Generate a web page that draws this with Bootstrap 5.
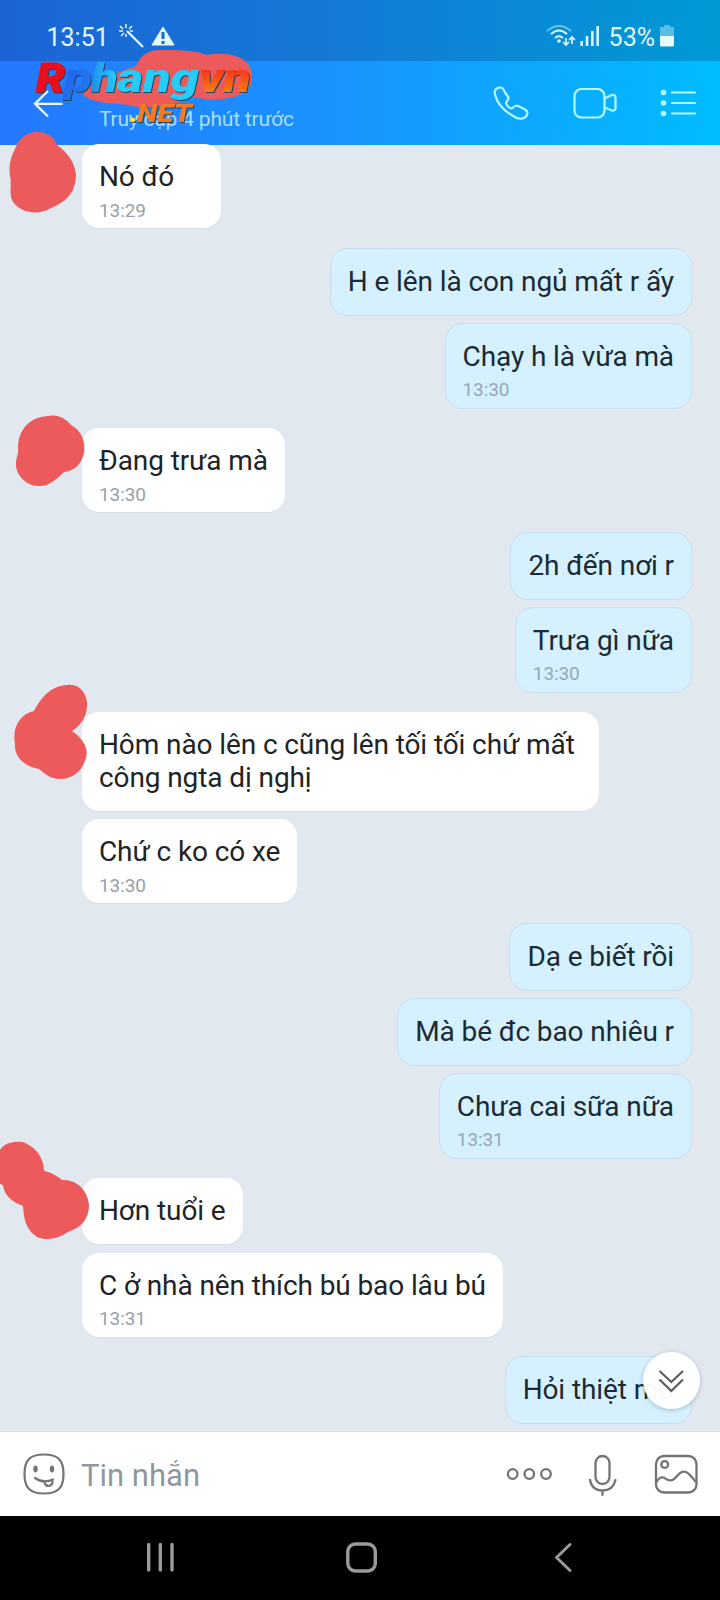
<!DOCTYPE html>
<html lang="vi">
<head>
<meta charset="utf-8">
<meta name="viewport" content="width=device-width, initial-scale=1">
<title>Tin nhắn</title>
<link href="https://cdn.jsdelivr.net/npm/bootstrap@5.3.0/dist/css/bootstrap.min.css" rel="stylesheet">
<style>
  body { width: 720px; height: 1600px; font-family: Roboto, "Noto Sans", sans-serif; background: #e2e8f0; overflow: hidden; }
  svg { display: block; flex: none; overflow: visible; }
  .top-area { height: 144.5px; background: linear-gradient(90deg, #2478ff, #1a93ff 45%, #00bcff); color: #fff; }
  .status { height: 60.5px; background: rgba(0, 20, 50, .2); padding: 14px 45px 0 46.5px; color: #e2f8ff; font-size: 25px; line-height: 47px; }
  .clock { width: 71.5px; }
  .appbar { height: 84px; }
  .last-seen { font-size: 21px; line-height: 25px; letter-spacing: -.2px; color: #a5defe; margin: 46.5px 0 0 35px; }
  .chat { height: 1287px; padding: 0 28px 0 82px; gap: 19.5px; margin-top: -.5px; }
  .bubble { height: 66px; flex: none; border-radius: 17px; padding: 17px 17px 0 17px; font-size: 28px; line-height: 32.8px; letter-spacing: -.1px; color: #202427; white-space: nowrap; }
  .bubble time { display: block; font-size: 19px; line-height: 22px; color: #98a1a8; margin-top: 6.2px; }
  .bubble:has(time) { height: 84px; }
  .bubble.two-lines { height: 98.5px; width: 517px; }
  .from-them .bubble { background: #fff; box-shadow: 0 1px 1px #d8dee6; }
  .from-them { gap: 8.5px; }
  .from-me { gap: 7px; }
  .from-me .bubble { height: 68px; background: #d5f0ff; border: 1px solid #c7dfed; padding-left: 17px; padding-top: 17px; color: #1b2a33; border-radius: 18px; }
  .from-me .bubble:has(time) { height: 86px; }
  .from-me time { color: #93a8b6; }
  .composer { height: 84.500px; background: #fff; border-top: 1px solid #d3dbe2; padding: 0 22px 0 23px; }
  .hint { font-size: 31px; color: #8e999f; margin: 4px 0 0 16px; }
  .sysnav { height: 84.500px; background: #000; }
  .jump { position: absolute; left: 642.500px; top: 1352px; width: 57px; height: 57px; border-radius: 50%; background: rgba(255,255,255,.97); box-shadow: 0 1px 4px rgba(60,80,100,.35); }
  .overlay-art { position: absolute; left: 0; top: 0; pointer-events: none; }
</style>
</head>
<body class="position-relative d-flex flex-column">
<header class="top-area flex-shrink-0">
  <div class="status d-flex">
    <span class="clock">13:51</span>
    <svg width="58" height="28" class="mt-2" viewBox="118 22 58 28" fill="none" stroke="#e2f8ff">
      <path d="M127 31L143 47" stroke-width="2.3"/>
      <path d="M126 24v4M120 26l3 3M119 31h4M121 36l3-3M126 34v3M132 26l-3 3M130 31h3" stroke-width="1.5"/>
      <path d="M163 27L174 45H152Z" fill="#e2f8ff" stroke="#e2f8ff" stroke-width="1" stroke-linejoin="round"/>
      <path d="M163 32v7M163 41v3" stroke="#1769c7" stroke-width="3"/>
    </svg>
    <svg width="60" height="28" class="mt-2 ms-auto" viewBox="546 22 60 28" fill="none" stroke="#d9fbff" stroke-width="2">
      <path d="M547 31Q559 21 571 31" stroke="#62c3e8"/>
      <path d="M551 34Q559 27 567 34M555 38Q559 34.5 563 38"/>
      <circle cx="559" cy="41" r="1.8" fill="#d9fbff" stroke="none"/>
      <path d="M566 38v7M563 42l3 3 3-3M572 44v-7M569 40l3-3 3 3" stroke-width="1.7"/>
      <path d="M581.7 46v-5M587 46v-10M592.3 46V31M597.7 46V26" stroke-width="2.6"/>
    </svg>
    <span style="margin-left:2.5px">53%</span>
    <svg width="15" height="28" class="mt-2" viewBox="660 22 15 28" style="margin-left:5px">
      <path d="M664 25h6v2h4v9h-14v-9h4z" fill="#5fbce0"/><path d="M660 36h14v9q0 1.500-1.500 1.500h-11q-1.500 0-1.500-1.500z" fill="#e5fbff"/>
    </svg>
  </div>
  <div class="appbar d-flex">
    <svg width="30" height="84" viewBox="34 60.5 30 84" style="margin-left:34px" fill="none" stroke="#e9fbff" stroke-width="2.300" class="position-relative z-3"><path d="M62.500 103.300H36M48 90.500L35 103.300L48 116"/></svg>
    <div class="last-seen">Truy cập 4 phút trước</div>
    <svg width="226" height="84" class="ms-auto" viewBox="494 60.5 226 84" fill="none" stroke="#b4fbff" stroke-width="2.2" stroke-linejoin="round" stroke-linecap="round">
      <path d="M495 94C494 90 496 87 500 87C503 87 504 89 505 92L508.500 97C509 99 506 101 506 103C507 106 509 107 511 108C513 108 514 105 517 105L525 109C528 111 528 113 526 116C523 119 518 119 514 116C505 111 497 103 495 94Z"/>
      <rect x="574.500" y="88.500" width="30" height="28.500" rx="7"/>
      <path d="M604.500 98L612 94.500Q615.500 94 615.500 97V107Q615.500 111 612 110L604.500 107"/>
      <g fill="#b4fbff" stroke="none"><circle cx="663.500" cy="92" r="2.800"/><circle cx="663.500" cy="102.500" r="2.800"/><circle cx="663.500" cy="113" r="2.800"/></g>
      <path d="M672 92h23M672 102.500h23M672 113h23"/>
    </svg>
  </div>
</header>

<main class="chat d-flex flex-column flex-shrink-0">
  <section class="from-them d-flex flex-column align-items-start"><div class="bubble" style="min-width:139px">Nó đó<time>13:29</time></div></section>
  <section class="from-me d-flex flex-column align-items-end">
    <div class="bubble">H e lên là con ngủ mất r ấy</div>
    <div class="bubble">Chạy h là vừa mà<time>13:30</time></div>
  </section>
  <section class="from-them d-flex flex-column align-items-start"><div class="bubble">Đang trưa mà<time>13:30</time></div></section>
  <section class="from-me d-flex flex-column align-items-end">
    <div class="bubble">2h đến nơi r</div>
    <div class="bubble">Trưa gì nữa<time>13:30</time></div>
  </section>
  <section class="from-them d-flex flex-column align-items-start">
    <div class="bubble two-lines">Hôm nào lên c cũng lên tối tối chứ mất<br>công ngta dị nghị</div>
    <div class="bubble">Chứ c ko có xe<time>13:30</time></div>
  </section>
  <section class="from-me d-flex flex-column align-items-end">
    <div class="bubble">Dạ e biết rồi</div>
    <div class="bubble">Mà bé đc bao nhiêu r</div>
    <div class="bubble">Chưa cai sữa nữa<time>13:31</time></div>
  </section>
  <section class="from-them d-flex flex-column align-items-start">
    <div class="bubble">Hơn tuổi e</div>
    <div class="bubble">C ở nhà nên thích bú bao lâu bú<time>13:31</time></div>
  </section>
  <section class="from-me d-flex flex-column align-items-end"><div class="bubble">Hỏi thiệt mo</div></section>
</main>

<footer class="flex-shrink-0">
  <div class="composer d-flex align-items-center">
    <svg width="42" height="42" viewBox="0 0 42 42" fill="none" stroke="#747474" stroke-width="2.200" stroke-linecap="round">
      <path d="M21 1.500C35 1.500 40.500 7 40.500 21S35 40.500 21 40.500S1.500 35 1.500 21S7 1.500 21 1.500Z"/>
      <ellipse cx="12.500" cy="16" rx="1.100" ry="2.300" fill="#747474"/><ellipse cx="29" cy="16" rx="1.100" ry="2.300" fill="#747474"/>
      <path d="M12 25Q20 31 30 26.500M21.500 29Q22 33 26 33Q30 32 29.500 27"/>
    </svg>
    <span class="hint">Tin nhắn</span>
    <svg width="192" height="44" class="ms-auto" viewBox="506 1452 192 44" fill="none" stroke="#747474" stroke-width="2.300" stroke-linecap="round" stroke-linejoin="round">
      <circle cx="512.700" cy="1474" r="4.800"/><circle cx="529.300" cy="1474" r="4.800"/><circle cx="546" cy="1474" r="4.800"/>
      <rect x="595.500" y="1456" width="14" height="28" rx="7"/>
      <path d="M590 1480Q592 1490.500 602.500 1490.500T615.500 1480M602.500 1490.500v4.500"/>
      <rect x="656" y="1456" width="40.500" height="36.500" rx="8"/><circle cx="664.700" cy="1464.500" r="3.400"/>
      <path d="M656.500 1482C659 1477 663 1476 666 1479C671 1482 674 1480 677 1476C681 1471 685 1470 689 1474L696 1482"/>
    </svg>
  </div>
  <div class="sysnav">
    <svg width="720" height="84" viewBox="0 1515.500 720 84" fill="none" stroke="#9a9a9a" stroke-width="3.400" stroke-linecap="round" stroke-linejoin="round">
      <path d="M148.700 1544v25.500M160.300 1544v25.500M172 1544v25.500"/>
      <rect x="347.800" y="1543.500" width="27.500" height="27" rx="7.500"/>
      <path d="M570 1544L556.500 1557L570 1570" stroke-width="3"/>
    </svg>
  </div>
</footer>

<div class="jump">
  <svg width="57" height="57" viewBox="0 0 57 57" fill="none" stroke="#5c5c5c" stroke-width="2.200"><path d="M16.500 19L28.300 30L40 19M16.500 27.500L28.300 39L40 27.500"/></svg>
</div>

<svg class="overlay-art" width="720" height="1600" viewBox="0 0 720 1600">
  <defs>
    <linearGradient id="gp" x1="0" x2="1" y1="0" y2="1"><stop offset="0" stop-color="#2a55e8"/><stop offset="1" stop-color="#1c86f0"/></linearGradient>
    <linearGradient id="gv" x1="0" x2="0" y1="0" y2="1"><stop offset="0.200" stop-color="#f2261b"/><stop offset="1" stop-color="#ff9a12"/></linearGradient>
    <linearGradient id="gh" x1="0" x2="1"><stop offset="0" stop-color="#2488ea"/><stop offset="1" stop-color="#22d0ff"/></linearGradient>
  </defs>
  <g fill="#ec5a5c">
    <path d="M83 95C88 82 117 73 136 66C141 55 148 50 160 50C178 50 194 50 207 55C222 52 240 54 248 64C254 73 254 87 244 93C231 100 207 101 195 97C180 103 151 111 128 105C113 103 95 104 83 95Z"/>
    <path d="M35 132C47 131 54 137 57 145C67 152 75 162 76 175C76 191 67 202 51 208C38 216 19 213 12 200C9 192 12 184 10 176C8 158 15 151 17 144C21 137 28 133 35 132Z"/>
    <path d="M49 416C58 414 66 419 71 425C81 430 86 441 84 453C81 465 74 471 64 472C56 480 48 487 38 486C27 486 15 475 16 463C16 457 19 454 18 448C18 430 30 416 49 416Z"/>
    <path d="M67 685C80 683 88 694 87 707C86 718 80 726 72 731C82 738 89 747 86 758C82 772 72 779 60 779C51 779 45 774 39 769C26 767 14 758 15 744C12 727 20 714 34 711C40 700 49 686 67 685Z"/>
    <path d="M0 1150C5 1142 15 1141 23 1142C36 1147 44 1158 44 1171C51 1172 57 1176 62 1180C77 1179 88 1191 89 1205C89 1220 80 1228 68 1232C58 1239 47 1241 37 1237C25 1229 24 1218 23 1206C12 1202 4 1195 3 1185L0 1184Z"/>
  </g>
  <g font-family="Roboto, sans-serif" font-weight="900" font-style="italic" style="filter:drop-shadow(1px 1.500px 0 #27435f)">
    <text x="36" y="92" font-size="41" textLength="29" lengthAdjust="spacingAndGlyphs" fill="#e9101d" stroke="#e9101d">R</text>
    <text x="64" y="92" font-size="41" textLength="28" lengthAdjust="spacingAndGlyphs" fill="url(#gp)">p</text>
    <text x="91" y="92" font-size="40" textLength="27" lengthAdjust="spacingAndGlyphs" fill="url(#gh)">h</text>
    <text x="117" y="92" font-size="41" textLength="82" lengthAdjust="spacingAndGlyphs" fill="#25cdfb">ang</text>
    <text x="199" y="92" font-size="40" textLength="52" lengthAdjust="spacingAndGlyphs" fill="url(#gv)">vn</text>
    <text x="129" y="122" font-size="26" textLength="10" lengthAdjust="spacingAndGlyphs" fill="#f5e62a">.</text>
    <text x="137" y="122" font-size="26" textLength="55" lengthAdjust="spacingAndGlyphs" fill="#f27a22">NET</text>
  </g>
</svg>
<script src="https://cdn.jsdelivr.net/npm/bootstrap@5.3.0/dist/js/bootstrap.bundle.min.js"></script>
</body>
</html>
